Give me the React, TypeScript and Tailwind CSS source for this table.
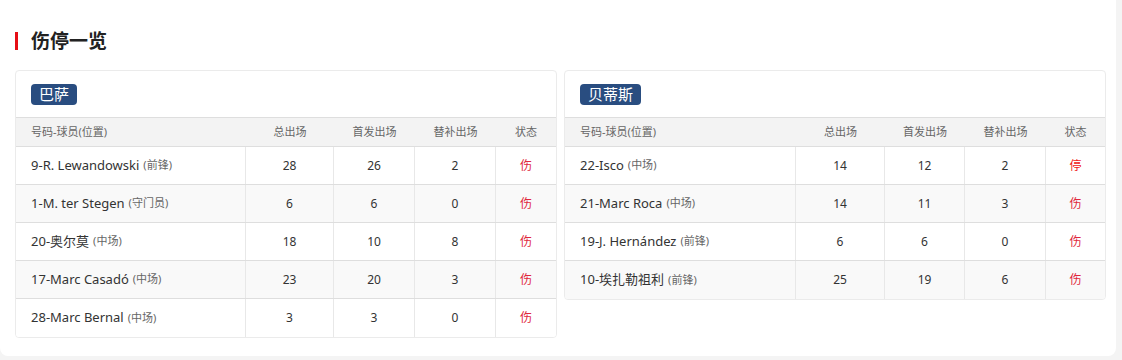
import React from "react";

type Row = { no: string; name: string; pos: string; total: number; start: number; sub: number; status: string };

const barca: Row[] = [
  { no: "9", name: "R. Lewandowski", pos: "前锋", total: 28, start: 26, sub: 2, status: "伤" },
  { no: "1", name: "M. ter Stegen", pos: "守门员", total: 6, start: 6, sub: 0, status: "伤" },
  { no: "20", name: "奥尔莫", pos: "中场", total: 18, start: 10, sub: 8, status: "伤" },
  { no: "17", name: "Marc Casadó", pos: "中场", total: 23, start: 20, sub: 3, status: "伤" },
  { no: "28", name: "Marc Bernal", pos: "中场", total: 3, start: 3, sub: 0, status: "伤" },
];

const betis: Row[] = [
  { no: "22", name: "Isco", pos: "中场", total: 14, start: 12, sub: 2, status: "停" },
  { no: "21", name: "Marc Roca", pos: "中场", total: 14, start: 11, sub: 3, status: "伤" },
  { no: "19", name: "J. Hernández", pos: "前锋", total: 6, start: 6, sub: 0, status: "伤" },
  { no: "10", name: "埃扎勒祖利", pos: "前锋", total: 25, start: 19, sub: 6, status: "伤" },
];

function TeamCard({ team, rows, cols }: { team: string; rows: Row[]; cols: string }) {
  return (
    <div className="w-[542px] shrink-0 border border-[#ebebeb] rounded-[4px] bg-white overflow-hidden self-start">
      <div className="h-[46px] flex items-center px-[15px]">
        <span className="bg-[#294d80] text-white text-[15px] leading-[21px] h-[21px] px-[8px] rounded-[4px]">{team}</span>
      </div>
      <div className={`grid ${cols} h-[30px] bg-[#f3f3f3] border-t border-b border-[#dedede] text-[11px] text-[#666] items-center`}>
        <div className="pl-[15px]">号码-球员(位置)</div>
        <div className="text-center">总出场</div>
        <div className="text-center">首发出场</div>
        <div className="text-center">替补出场</div>
        <div className="text-center">状态</div>
      </div>
      {rows.map((r, i) => (
        <div
          key={i}
          className={`grid ${cols} h-[38px] ${i % 2 === 1 ? "bg-[#f9f9f9]" : "bg-white"} ${i < rows.length - 1 ? "border-b border-[#dedede]" : ""} text-[12px] text-[#333]`}
        >
          <div className="pl-[15px] flex items-center border-r border-[#e8e8e8] whitespace-nowrap">
            <span className="text-[13px] text-[#333]">{r.no}-{r.name}</span>
            <span className="text-[11px] text-[#666] ml-[4px]">({r.pos})</span>
          </div>
          <div className="flex items-center justify-center border-r border-[#e8e8e8]">{r.total}</div>
          <div className="flex items-center justify-center border-r border-[#e8e8e8]">{r.start}</div>
          <div className="flex items-center justify-center border-r border-[#e8e8e8]">{r.sub}</div>
          <div className={`flex items-center justify-center ${r.status === "停" ? "text-[#f01818]" : "text-[#e0283c]"}`}>{r.status}</div>
        </div>
      ))}
    </div>
  );
}

export default function App() {
  return (
    <div
      className="w-[1122px] h-[360px] bg-[#f4f4f4]"
      style={{ fontFamily: '"Noto Sans", "Noto Sans CJK SC", sans-serif' }}
    >
      <div className="w-[1116px] h-[356px] bg-white rounded-b-[8px] pl-[15px] pr-[11px] pt-[31px]">
        <div className="flex items-center h-[20px]">
          <div className="w-[3px] h-[18px] bg-[#e60e16]" />
          <h2 className="ml-[13px] text-[19px] font-bold text-[#222] leading-[20px]">伤停一览</h2>
        </div>
        <div className="flex gap-[7px] mt-[19px]">
          <TeamCard team="巴萨" rows={barca} cols="grid-cols-[230px_88px_81px_81px_1fr]" />
          <TeamCard team="贝蒂斯" rows={betis} cols="grid-cols-[231px_89px_80px_81px_1fr]" />
        </div>
      </div>
    </div>
  );
}
